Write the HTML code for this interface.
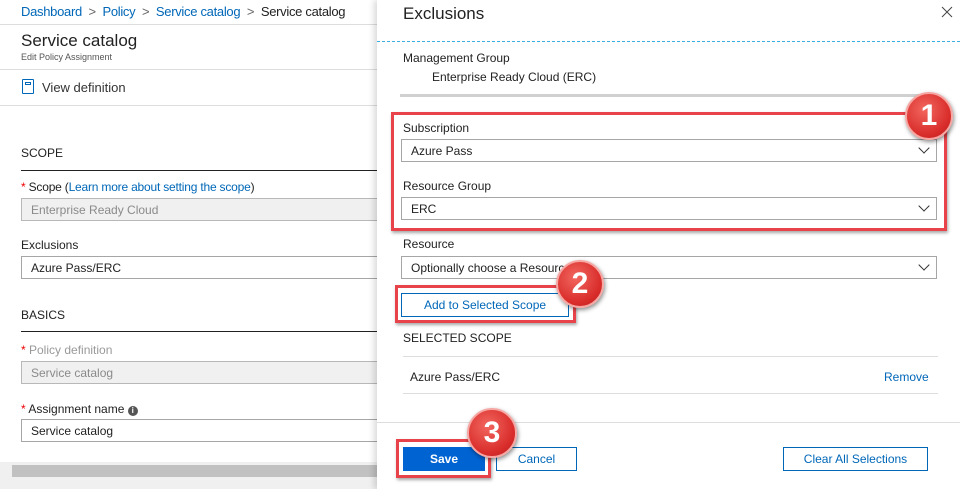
<!DOCTYPE html>
<html><head><meta charset="utf-8"><style>
*{margin:0;padding:0;box-sizing:border-box}
body{width:960px;height:489px;overflow:hidden;background:#fff;font-family:"Liberation Sans",sans-serif;position:relative;color:#222}
.a{position:absolute}
.t{font-size:12px;white-space:nowrap}
.blue{color:#0067b8}
.inp{position:absolute;border:1px solid #a6a6a6;height:23px;font-size:12px;padding:4px 9px;white-space:nowrap;background:#fff}
.dis{background:#f0f0f0;color:#8a8a8a;border-color:#b8b8b8}
.chev{position:absolute;right:8px;top:4px;width:8px;height:8px;border-right:1.3px solid #333;border-bottom:1.3px solid #333;transform:rotate(45deg)}
.red{position:absolute;border:3px solid #e8434b;box-shadow:1px 2px 3px rgba(0,0,0,.35)}
.badge{position:absolute;border-radius:50%;background:radial-gradient(circle at 40% 35%,#f2675f,#d92d2b 65%,#b51d1d);color:#fff;font-weight:bold;text-align:center;box-shadow:1px 2px 4px rgba(0,0,0,.45);border:2px solid #f6a7a3}
.btn{position:absolute;border:1px solid #0067b8;color:#0067b8;font-size:12px;text-align:center;background:#fff}
</style></head><body>
<!-- left -->
<div class="a t" style="left:21px;top:4px;font-size:13px;letter-spacing:-0.3px"><span class="blue">Dashboard</span> <span style="color:#666">&nbsp;&gt;&nbsp;</span> <span class="blue">Policy</span> <span style="color:#666">&nbsp;&gt;&nbsp;</span> <span class="blue">Service catalog</span> <span style="color:#666">&nbsp;&gt;&nbsp;</span> Service catalog</div>
<div class="a" style="left:0;top:24px;width:378px;height:1px;background:#ddd"></div>
<div class="a" style="left:21px;top:31px;font-size:17px">Service catalog</div>
<div class="a" style="left:21px;top:52px;font-size:9px;color:#555">Edit Policy Assignment</div>
<div class="a" style="left:0;top:69px;width:378px;height:1px;background:#ddd"></div>
<div class="a" style="left:22px;top:79px;width:12px;height:15px;border:1.5px solid #0067b8;border-radius:1px"></div>
<div class="a" style="left:25px;top:82px;width:6px;height:3px;border:1px solid #0067b8"></div>
<div class="a" style="left:42px;top:80px;font-size:13px;color:#333">View definition</div>
<div class="a" style="left:0;top:105px;width:378px;height:1px;background:#ddd"></div>
<div class="a t" style="left:21px;top:146px">SCOPE</div>
<div class="a" style="left:21px;top:170px;width:357px;height:1px;background:#222"></div>
<div class="a t" style="left:21px;top:180px;letter-spacing:-0.2px"><span style="color:#e00">*</span> Scope (<span class="blue">Learn more about setting the scope</span>)</div>
<div class="inp dis" style="left:21px;top:198px;width:370px">Enterprise Ready Cloud</div>
<div class="a t" style="left:21px;top:238px">Exclusions</div>
<div class="inp" style="left:21px;top:256px;width:370px">Azure Pass/ERC</div>
<div class="a t" style="left:21px;top:308px">BASICS</div>
<div class="a" style="left:21px;top:331px;width:357px;height:1px;background:#222"></div>
<div class="a t" style="left:21px;top:343px;color:#999"><span style="color:#e00">*</span> Policy definition</div>
<div class="inp dis" style="left:21px;top:361px;width:370px">Service catalog</div>
<div class="a t" style="left:21px;top:402px"><span style="color:#e00">*</span> Assignment name <span style="display:inline-block;width:10px;height:10px;border-radius:50%;background:#555;color:#fff;font-size:8px;text-align:center;line-height:10px;font-weight:bold">i</span></div>
<div class="inp" style="left:21px;top:419px;width:370px">Service catalog</div>
<div class="a" style="left:0;top:462px;width:378px;height:27px;background:#f0f0f0"></div>
<div class="a" style="left:12px;top:465px;width:366px;height:12px;background:#c1c1c1"></div>
<!-- right panel -->
<div class="a" style="left:377px;top:0;width:583px;height:489px;background:#fff;box-shadow:-3px 0 6px rgba(0,0,0,.15)"></div>
<div class="a" style="left:403px;top:4px;font-size:17px">Exclusions</div>
<svg class="a" style="left:941px;top:6px" width="12" height="12" viewBox="0 0 12 12"><path d="M1 1L11 11M11 1L1 11" stroke="#444" stroke-width="1"/></svg>
<div class="a" style="left:377px;top:41px;width:583px;border-top:1px dashed #3aaee0"></div>
<div class="a t" style="left:403px;top:51px">Management Group</div>
<div class="a t" style="left:432px;top:70px">Enterprise Ready Cloud (ERC)</div>
<div class="a" style="left:400px;top:94px;width:537px;height:3px;background:#d0d0d0"></div>
<div class="a t" style="left:403px;top:121px">Subscription</div>
<div class="inp" style="left:401px;top:139px;width:536px">Azure Pass<span class="chev"></span></div>
<div class="a t" style="left:403px;top:179px">Resource Group</div>
<div class="inp" style="left:401px;top:197px;width:536px">ERC<span class="chev"></span></div>
<div class="a t" style="left:403px;top:237px">Resource</div>
<div class="inp" style="left:401px;top:256px;width:536px">Optionally choose a Resource<span class="chev"></span></div>
<div class="btn" style="left:401px;top:293px;width:168px;height:24px;line-height:22px">Add to Selected Scope</div>
<div class="a t" style="left:403px;top:331px">SELECTED SCOPE</div>
<div class="a" style="left:403px;top:356px;width:535px;height:1px;background:#ddd"></div>
<div class="a t" style="left:410px;top:370px">Azure Pass/ERC</div>
<div class="a t blue" style="left:884px;top:370px">Remove</div>
<div class="a" style="left:403px;top:393px;width:535px;height:1px;background:#ddd"></div>
<div class="a" style="left:377px;top:422px;width:583px;height:1px;background:#ddd"></div>
<div class="a" style="left:403px;top:447px;width:82px;height:24px;background:#0063d2;color:#fff;font-size:12px;font-weight:bold;text-align:center;line-height:24px">Save</div>
<div class="btn" style="left:496px;top:447px;width:81px;height:24px;line-height:22px">Cancel</div>
<div class="btn" style="left:783px;top:447px;width:145px;height:24px;line-height:22px">Clear All Selections</div>
<!-- annotations -->
<div class="red" style="left:391px;top:112px;width:556px;height:119px"></div>
<div class="red" style="left:395px;top:285px;width:181px;height:38px"></div>
<div class="red" style="left:396px;top:439px;width:95px;height:39px"></div>
<div class="badge" style="left:905px;top:92px;width:48px;height:48px;font-size:30px;line-height:43px">1</div>
<div class="badge" style="left:556px;top:260px;width:48px;height:48px;font-size:30px;line-height:43px">2</div>
<div class="badge" style="left:467px;top:408px;width:50px;height:50px;font-size:30px;line-height:45px">3</div>
</body></html>
